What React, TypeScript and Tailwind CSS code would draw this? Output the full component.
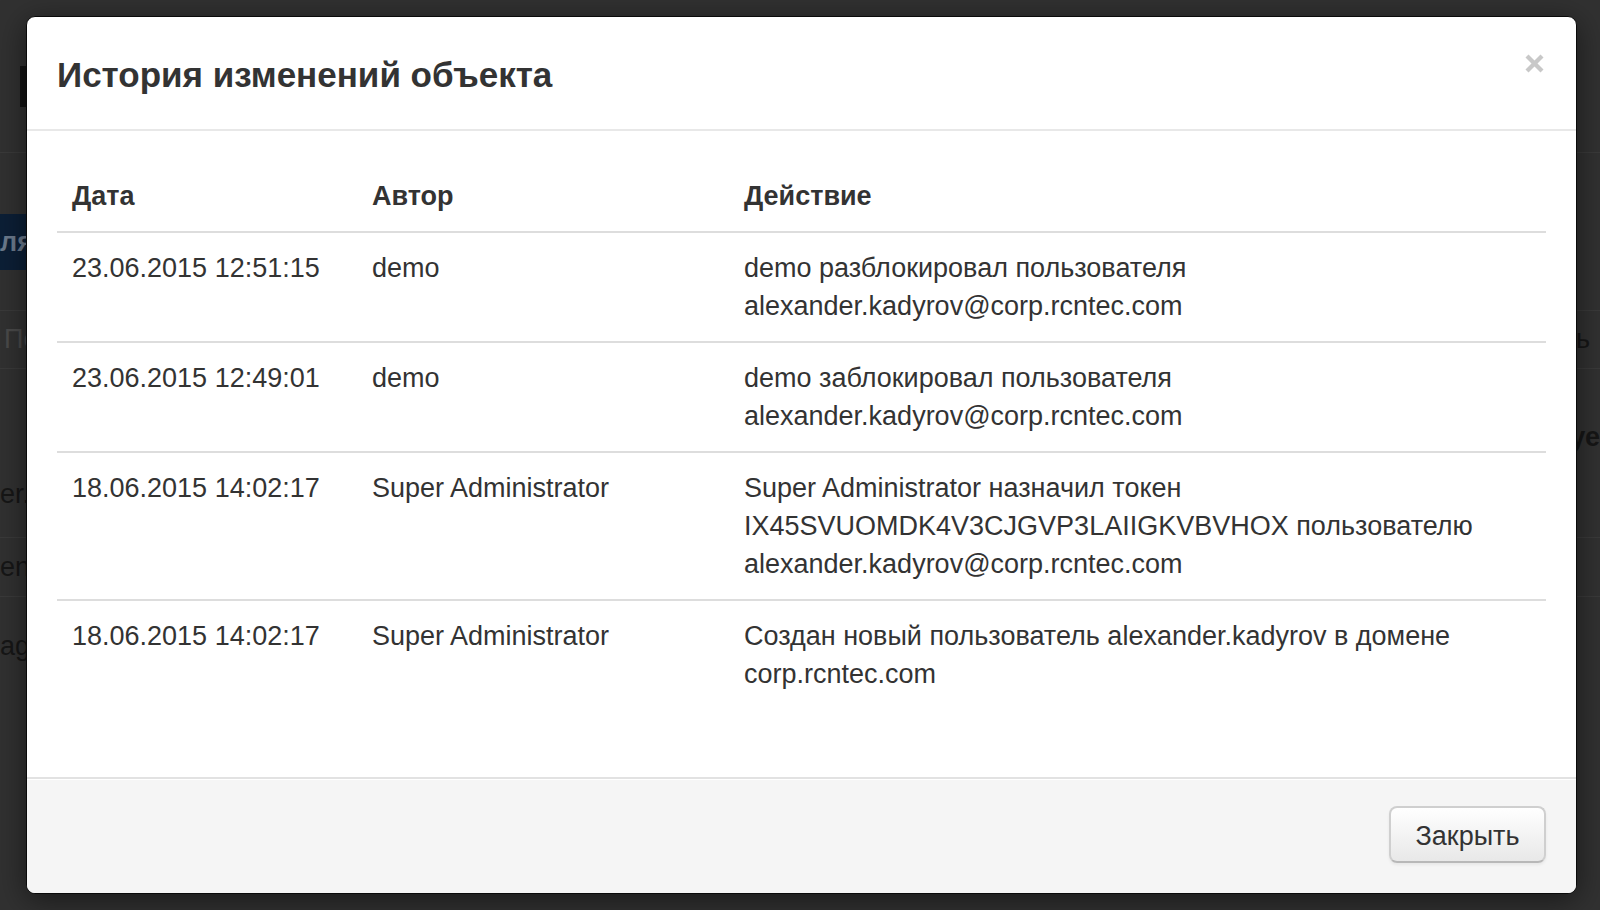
import React from "react";

const rows: { date: string; author: string; action: string[] }[] = [
  {
    date: "23.06.2015 12:51:15",
    author: "demo",
    action: ["demo разблокировал пользователя", "alexander.kadyrov@corp.rcntec.com"],
  },
  {
    date: "23.06.2015 12:49:01",
    author: "demo",
    action: ["demo заблокировал пользователя", "alexander.kadyrov@corp.rcntec.com"],
  },
  {
    date: "18.06.2015 14:02:17",
    author: "Super Administrator",
    action: [
      "Super Administrator назначил токен",
      "IX45SVUOMDK4V3CJGVP3LAIIGKVBVHOX пользователю",
      "alexander.kadyrov@corp.rcntec.com",
    ],
  },
  {
    date: "18.06.2015 14:02:17",
    author: "Super Administrator",
    action: ["Создан новый пользователь alexander.kadyrov в домене", "corp.rcntec.com"],
  },
];

function Background() {
  return (
    <div className="flex flex-col w-full h-full text-[27px] text-[#161616]">
      <div className="h-[153px] border-b border-[#3a3a3a] flex">
        <div className="ml-[20px] mt-[66px] w-[8px] h-[41px] bg-[#141414]" />
      </div>
      <div className="h-[61px]" />
      <div className="h-[56px] w-[80px] bg-[#0c1f36] flex items-center text-[#6b7a8c] font-bold">
        <span>ля</span>
      </div>
      <div className="h-[41px] border-b border-[#3a3a3a]" />
      <div className="h-[58px] border-b border-[#3a3a3a] flex items-center justify-between">
        <span className="ml-[4px] text-[#4a4a4a]">По</span>
        <span className="mr-[10px]">ь</span>
      </div>
      <div className="h-[169px] border-b border-[#3a3a3a] flex justify-between">
        <span className="mt-[105px]">er.k</span>
        <span className="mt-[48px] font-bold">уе</span>
      </div>
      <div className="h-[59px] border-b border-[#3a3a3a] flex items-center">
        <span>en</span>
      </div>
      <div className="h-[100px] flex">
        <span className="mt-[29px]">agu</span>
      </div>
    </div>
  );
}

export default function App() {
  return (
    <div className="relative w-[1600px] h-[910px] bg-[#313131] overflow-hidden font-['Liberation_Sans',Arial,sans-serif]">
      <Background />
      <div className="absolute left-[26px] top-[16px] w-[1551px] h-[878px] bg-white rounded-[9px] border border-[#0a0a0a] shadow-[0_6px_30px_rgba(0,0,0,0.5)] overflow-hidden flex flex-col">
        <div className="h-[114px] shrink-0 border-b-2 border-[#e8e8e8] px-[30px] flex items-center justify-between">
          <h3 className="text-[35px] leading-[42px] font-bold text-[#333] pt-[4px]">
            История изменений объекта
          </h3>
          <svg
            className="self-start mt-[37px] mr-[2px]"
            width="19"
            height="19"
            viewBox="0 0 19 19"
            aria-label="close"
          >
            <line x1="2" y1="2" x2="17" y2="17" stroke="#c8c8c8" strokeWidth="4.2" />
            <line x1="17" y1="2" x2="2" y2="17" stroke="#c8c8c8" strokeWidth="4.2" />
          </svg>
        </div>
        <div className="flex-1 px-[30px] pt-[30px]">
          <table className="w-full border-collapse text-[27px] leading-[38px] text-[#333]">
            <colgroup>
              <col className="w-[300px]" />
              <col className="w-[372px]" />
              <col />
            </colgroup>
            <thead>
              <tr>
                <th className="text-left font-bold px-[15px] py-[16px] border-b-2 border-[#dddddd]">Дата</th>
                <th className="text-left font-bold px-[15px] py-[16px] border-b-2 border-[#dddddd]">Автор</th>
                <th className="text-left font-bold px-[15px] py-[16px] border-b-2 border-[#dddddd]">Действие</th>
              </tr>
            </thead>
            <tbody>
              {rows.map((r, i) => (
                <tr key={i} className={i > 0 ? "border-t-2 border-[#dddddd]" : ""}>
                  <td className="align-top px-[15px] py-[16px] whitespace-nowrap">{r.date}</td>
                  <td className="align-top px-[15px] py-[16px] whitespace-nowrap">{r.author}</td>
                  <td className="align-top px-[15px] py-[16px]">
                    {r.action.map((l, j) => (
                      <div key={j} className="whitespace-nowrap">
                        {l}
                      </div>
                    ))}
                  </td>
                </tr>
              ))}
            </tbody>
          </table>
        </div>
        <div className="h-[116px] shrink-0 border-t-2 border-[#e2e2e2] bg-[#f5f5f5] shadow-[inset_0_1px_0_#ffffff] flex justify-end items-start pt-[27px] px-[30px]">
          <button className="w-[157px] h-[57px] rounded-[8px] border-2 border-[#cfcfcf] border-b-[#b8b8b8] bg-linear-to-b from-white to-[#e8e8e8] text-[27px] text-[#333] pt-[3px] shadow-[0_2px_3px_rgba(0,0,0,0.06)]">
            Закрыть
          </button>
        </div>
      </div>
    </div>
  );
}
